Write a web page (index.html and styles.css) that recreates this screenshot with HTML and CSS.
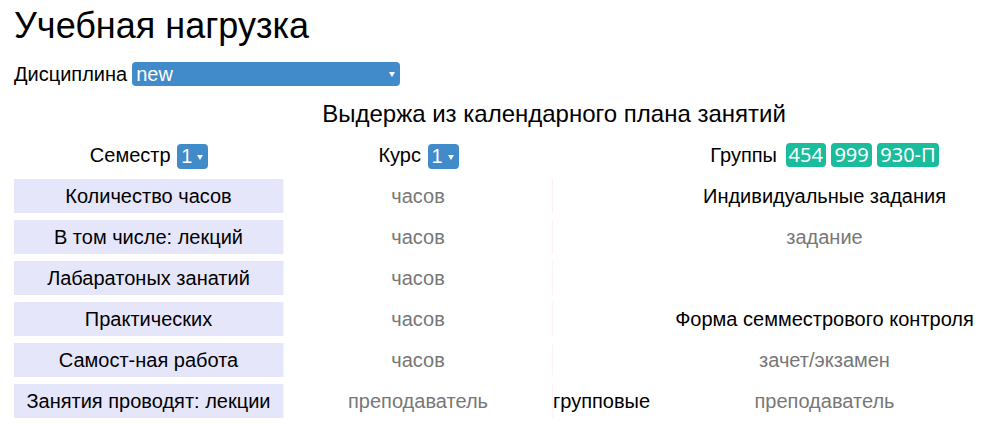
FILE: index.html
```html
<!DOCTYPE html>
<html lang="ru">
<head>
<meta charset="utf-8">
<title>Учебная нагрузка</title>
<link rel="stylesheet" href="styles.css">
</head>
<body>
<div class="page">
  <h1 class="title">Учебная нагрузка</h1>
  <div class="discipline">
    <span class="label">Дисциплина</span>
    <span class="select select-wide"><span class="select-text">new</span><span class="caret"></span></span>
  </div>
  <h2 class="heading">Выдержа из календарного плана занятий</h2>
  <div class="grid">
    <div class="head-cell c1">Семестр <span class="select select-small"><span class="select-text">1</span><span class="caret"></span></span></div>
    <div class="head-cell c2">Курс <span class="select select-small"><span class="select-text">1</span><span class="caret"></span></span></div>
    <div class="head-cell c4">Группы <span class="badges"><span class="badge">454</span> <span class="badge">999</span> <span class="badge">930-П</span></span></div>

    <div class="cell name">Количество часов</div>
    <div class="cell val">часов</div>
    <div class="cell wide strong">Индивидуальные задания</div>

    <div class="cell name">В том числе: лекций</div>
    <div class="cell val">часов</div>
    <div class="cell wide val">задание</div>

    <div class="cell name">Лабаратоных занатий</div>
    <div class="cell val">часов</div>
    <div class="cell wide"></div>

    <div class="cell name">Практических</div>
    <div class="cell val">часов</div>
    <div class="cell wide strong">Форма семместрового контроля</div>

    <div class="cell name">Самост-ная работа</div>
    <div class="cell val">часов</div>
    <div class="cell wide val">зачет/экзамен</div>

    <div class="cell name">Занятия проводят: лекции</div>
    <div class="cell val">преподаватель</div>
    <div class="cell kind">групповые</div>
    <div class="cell val last">преподаватель</div>
  </div>
</div>
</body>
</html>
```

FILE: styles.css
```css
* { box-sizing: border-box; }
html, body { margin: 0; padding: 0; background: #fff; }
body {
  font-family: "Liberation Sans", Arial, sans-serif;
  color: #000;
}
.page {
  padding: 0 0 0 14px;
  width: 999px;
}
.title {
  margin: 0;
  padding-top: 5px;
  font-size: 36px;
  font-weight: normal;
  line-height: 41px;
}
.discipline {
  margin-top: 16px;
  display: flex;
  align-items: center;
  font-size: 20px;
  height: 24px;
}
.discipline .label { margin-right: 5px; }
.select {
  position: relative;
  display: inline-flex;
  align-items: center;
  background: #428bca;
  color: #fff;
  border-radius: 4px;
  vertical-align: middle;
}
.select-wide {
  width: 268px;
  height: 24px;
  font-size: 20px;
  padding-left: 4px;
}
.select-small {
  width: 31px;
  height: 25px;
  font-size: 20px;
  padding-left: 4px;
  margin-left: 1px;
}
.caret {
  position: absolute;
  right: 5px;
  top: 50%;
  margin-top: -2px;
  width: 0;
  height: 0;
  border-left: 3.5px solid transparent;
  border-right: 3.5px solid transparent;
  border-top: 5px solid #fff;
}
.heading {
  margin: 13px 0 0 0;
  padding-left: 95px;
  text-align: center;
  font-size: 24px;
  font-weight: normal;
  line-height: 30px;
}
.grid {
  margin-top: 12px;
  display: grid;
  grid-template-columns: 270px 269px 97px 349px;
  row-gap: 7px;
  font-size: 20px;
}
.head-cell {
  text-align: center;
  height: 32px;
  line-height: 25px;
  padding-top: 2px;
  margin-bottom: -1px;
}
.c1 { grid-column: 1; }
.c2 { grid-column: 2; }
.c4 { grid-column: 4; }
.badges { margin-left: 3px; }
.badge {
  display: inline-block;
  background: #1abc9c;
  color: #fff;
  font-family: "Noto Sans", "Open Sans", sans-serif;
  font-size: 20px;
  line-height: 24px;
  height: 24px;
  padding: 0 3px;
  border-radius: 4px;
  vertical-align: top;
  margin-top: 0;
}
.cell {
  height: 34px;
  line-height: 34px;
  text-align: center;
  border-right: 1px solid #fff0f5;
  white-space: nowrap;
}
.name { background: #e6e6fa; }
.val { color: #777; }
.wide { grid-column: 3 / 5; padding-left: 97px; border-right: none; }
.strong { color: #000; }
.kind { text-align: left; border-right: none; }
.last { border-right: none; }
```
